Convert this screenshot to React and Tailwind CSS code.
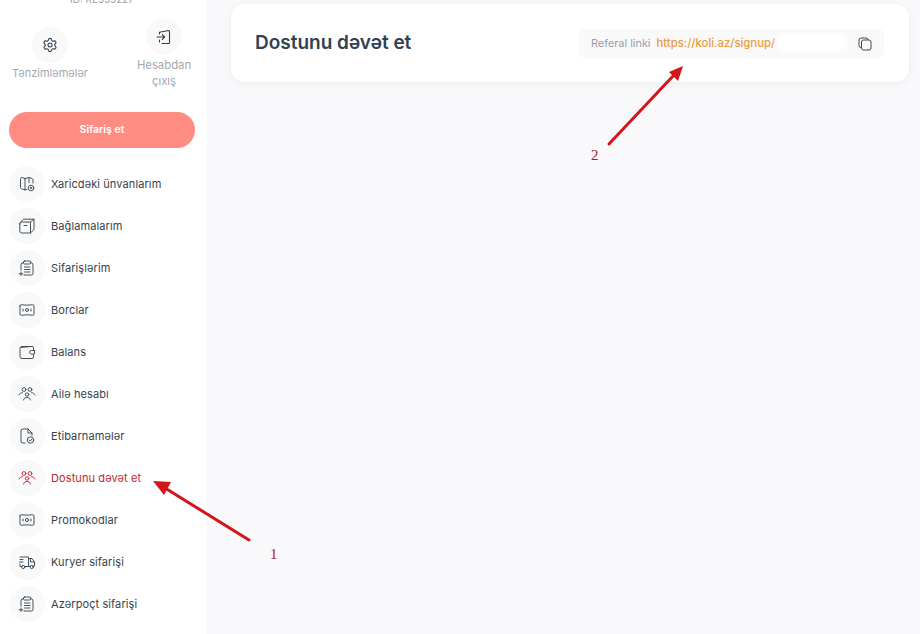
import React from "react";

const S = ({ children, color = "#3a4954" }) => (
  <svg width="18" height="18" viewBox="0 0 18 18" fill="none" stroke={color} strokeWidth="0.950" strokeLinecap="round" strokeLinejoin="round">{children}</svg>
);

const MapI = () => (<S><path d="M7 3.500 4 2.500c-.8-.2-1.500.2-1.500 1v9c0 .6.3 1 .9 1.200L7 15V3.500Z" /><path d="M7 3.500 11 2.500v5" /><path d="M11 2.500l3 1c.6.2 1 .7 1 1.200V8" /><path d="M7 15l2-.6" /><circle cx="13" cy="13" r="2.800" /><circle cx="13" cy="13" r=".7" /></S>);
const BoxI = () => (<S><path d="M1.800 7a2 2 0 0 1 2-2h8.700v11H3.800a2 2 0 0 1-2-2V7Z" /><path d="M2.300 5.500 5.500 2.200H16v10.300l-3.500 3.500" /><path d="M12.500 5 16 2.200" /><path d="M6 8.500h2.800" /></S>);
const ListI = () => (<S><path d="M5.500 3.500A2.500 2.500 0 0 0 3 6v5" /><path d="M12.500 3.500A2.500 2.500 0 0 1 15 6v8.500A1.500 1.500 0 0 1 13.500 16H6" /><rect x="5.500" y="2" width="7" height="3" rx="1" /><path d="M6.500 8h5.500M6.500 10.500h5.500M6.500 13h5.500" /><path d="M3 13v3.500M1.200 14.800h3.600" /></S>);
const BillI = () => (<S><path d="M2 5c0-.8.6-1.300 1.300-1.300 4 .6 7.400.6 11.400 0 .7 0 1.300.5 1.300 1.300v8c0 .8-.6 1.300-1.300 1.300-4-.6-7.400-.6-11.400 0C2.600 14.300 2 13.800 2 13V5Z" /><circle cx="9" cy="9" r="1.500" /><path d="M5 8v2M13 8v2" /></S>);
const WalletI = () => (<S><path d="M15.500 7V5A1.500 1.500 0 0 0 14 3.500H4A2 2 0 0 0 2 5.500v8A2 2 0 0 0 4 15.500h10a1.500 1.500 0 0 0 1.500-1.500v-2" /><path d="M2.500 4.500 13 3.500" /><path d="M16.500 7.500h-3a1.800 1.800 0 0 0 0 3.600h3V7.500Z" /></S>);
const GroupI = ({ color }) => (<S color={color}><circle cx="6" cy="4.500" r="1.900" /><circle cx="12" cy="4.500" r="1.900" /><circle cx="9" cy="9.500" r="1.700" /><path d="M5.500 15c.4-1.800 1.800-2.500 3.500-2.500s3.100.7 3.500 2.500" /><path d="M1 10c.6-1.500 2-2.300 3.500-2.300M17 10c-.6-1.500-2-2.300-3.500-2.300" /></S>);
const DocI = () => (<S><path d="M7 16H5a2 2 0 0 1-2-2V4a2 2 0 0 1 2-2h5l4 4v2.500" /><path d="M10 2v4h4" /><circle cx="12.500" cy="13" r="3.200" /><path d="M11.200 13l1 1 1.600-1.700" /></S>);
const TruckI = () => (<S><path d="M2 4h8.500v9" /><path d="M2 6.500h3M1.500 9h3.500" /><path d="M10.500 5.500H14l2.500 3.500v4h-1.500" /><path d="M12.500 6V9h3.500" /><path d="M2 11v2.500h1.500M7 13.500h5.500" /><circle cx="5.200" cy="14" r="1.600" /><circle cx="13.700" cy="14" r="1.600" /></S>);

const items = [
  ["Xaricdəki ünvanlarım", MapI],
  ["Bağlamalarım", BoxI],
  ["Sifarişlərim", ListI],
  ["Borclar", BillI],
  ["Balans", WalletI],
  ["Ailə hesabı", GroupI],
  ["Etibarnamələr", DocI],
  ["Dostunu dəvət et", GroupI, true],
  ["Promokodlar", BillI],
  ["Kuryer sifarişi", TruckI],
  ["Azərpoçt sifarişi", ListI],
];

const Circle = ({ children }) => (
  <div className="w-9 h-9 rounded-full bg-[#f9f9fa] flex items-center justify-center shrink-0">{children}</div>
);

export default function App() {
  return (
    <div className="relative w-[920px] h-[634px] overflow-hidden flex bg-[#f9f9fb] font-['Inter','Liberation_Sans',sans-serif]">
      <aside className="w-[207px] h-full bg-white shrink-0 overflow-hidden">
        <div className="h-[6px] relative overflow-hidden">
          <div className="absolute left-0 right-[3px] -top-[8px] text-center text-[10px] leading-[14px] text-[#9a9ea6]">ID: KL555227</div>
        </div>
        <div className="flex h-[106px]">
          <div className="w-[100px] flex flex-col items-center pt-[21px]">
            <Circle>
              <svg width="16" height="16" viewBox="0 0 24 24" fill="none" stroke="#2f3e4a" strokeWidth="1.600" strokeLinecap="round" strokeLinejoin="round"><path d="M9.671 4.136a2.34 2.34 0 0 1 4.659 0 2.34 2.34 0 0 0 3.319 1.915 2.34 2.34 0 0 1 2.33 4.033 2.34 2.34 0 0 0 0 3.831 2.34 2.34 0 0 1-2.33 4.033 2.34 2.34 0 0 0-3.319 1.915 2.34 2.34 0 0 1-4.659 0 2.34 2.34 0 0 0-3.32-1.915 2.34 2.34 0 0 1-2.33-4.033 2.34 2.34 0 0 0 0-3.831A2.34 2.34 0 0 1 6.350 6.051a2.34 2.34 0 0 0 3.320-1.915" /><circle cx="12" cy="12" r="3" /></svg>
            </Circle>
            <div className="mt-[1px] text-[11px] leading-[18px] text-[#a4a8ae] whitespace-nowrap">Tənzimləmələr</div>
          </div>
          <div className="w-[64px] ml-[32px] flex flex-col items-center pt-[13px]">
            <Circle>
              <svg width="16" height="16" viewBox="0 0 16 16" fill="none" stroke="#2f3e4a" strokeWidth="1.100" strokeLinecap="round" strokeLinejoin="round"><path d="M3.500 5V3.200l9-1.700c.6 0 1 .4 1 1v11c0 .6-.4 1-1 1H6" /><path d="M1 8h7.500M6.300 5.700 8.600 8l-2.300 2.300" /><path d="M3.500 11v2" /></svg>
            </Circle>
            <div className="mt-[2px] text-[11.300px] leading-[16px] text-[#a4a8ae] text-center w-[64px]">Hesabdan<br />çıxış</div>
          </div>
        </div>
        <div className="pl-[9px] pr-[12px]">
          <div className="h-9 rounded-full bg-[#fe8c83] flex items-center justify-center text-white text-[10.500px] font-semibold">Sifariş et</div>
        </div>
        <nav className="mt-[18px] pl-[9px] flex flex-col gap-[6px]">
          {items.map(([label, Icon, active]) => (
            <div key={label} className="flex items-center gap-[6px]">
              <Circle><Icon color={active ? "#c0272d" : undefined} /></Circle>
              <span className={"text-[11px] tracking-[0.1px] whitespace-nowrap " + (active ? "text-[#c0272d]" : "text-[#35434e]")}>{label}</span>
            </div>
          ))}
        </nav>
      </aside>

      <main className="flex-1 pl-[24px] pr-[11px] pt-[4px]">
        <div className="h-[78px] rounded-[14px] bg-white shadow-[0_2px_10px_rgba(30,40,60,0.05)] flex items-center justify-between pl-[24px] pr-[25px]">
          <h1 className="text-[19px] font-semibold text-[#2f4350]">Dostunu dəvət et</h1>
          <div className="relative w-[305px] h-[29px] rounded-[6px] bg-[#f9f9fa] flex items-center pl-[12px] text-[10.900px]">
            <span className="text-[#9a9ea6] whitespace-nowrap">Referal linki</span>
            <span className="ml-[6px] text-[#ea9c42] text-[11.300px] font-medium whitespace-nowrap">https://koli.az/signup/</span>
            <div className="absolute left-[198px] top-[5px] w-[71px] h-[17px] rounded-[6px] bg-white blur-[2px]"></div>
            <svg className="absolute left-[279px] top-[8px]" width="14" height="14" viewBox="0 0 14 14" fill="none" stroke="#3c4a55" strokeWidth="1"><rect x="3.500" y="3" width="9.500" height="10" rx="2" /><path d="M3 10.500A2 2 0 0 1 1 8.500V3a2 2 0 0 1 2-2h5a2 2 0 0 1 2 2" /></svg>
          </div>
        </div>
      </main>

      <svg className="absolute inset-0 pointer-events-none" width="920" height="634" viewBox="0 0 920 634" fill="none">
        <path d="M249 540 165 488" stroke="#d5141a" strokeWidth="3" strokeLinecap="round" />
        <path d="M153 481 171 482 164 495Z" fill="#d5141a" />
        <path d="M609 144 674 75" stroke="#d5141a" strokeWidth="3" strokeLinecap="round" />
        <path d="M683 66 678 81 669 72Z" fill="#d5141a" />
      </svg>
      <span className="absolute left-[270px] top-[545px] text-[15px] leading-[18px] text-[#b3161b] font-['Liberation_Serif',serif]">1</span>
      <span className="absolute left-[591px] top-[146px] text-[15px] leading-[18px] text-[#b3161b] font-['Liberation_Serif',serif]">2</span>
    </div>
  );
}
